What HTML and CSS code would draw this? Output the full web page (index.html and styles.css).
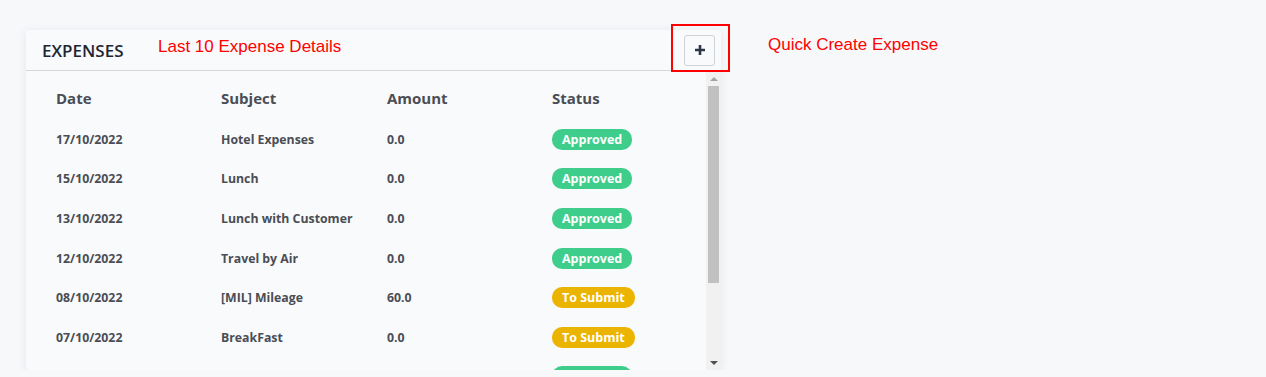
FILE: index.html
```html
<!DOCTYPE html>
<html lang="en">
<head>
    <meta charset="UTF-8">
    <title>Expenses</title>
    <link rel="stylesheet" href="styles.css">
</head>
<body>
    <div class="page">
        <div class="card">
            <div class="card-head">
                <h2 class="title">EXPENSES</h2>
                <span class="note note-left">Last 10 Expense Details</span>
                <button class="add-btn">
                    <svg width="10" height="10" viewBox="0 0 10 10"><path d="M5 0v10M0 5h10" stroke="#2d3646" stroke-width="2.6"/></svg>
                </button>
                <span class="note-box"></span>
            </div>
            <div class="card-body">
                <div class="table-wrap">
                    <table class="list">
                        <thead>
                            <tr><th>Date</th><th>Subject</th><th>Amount</th><th>Status</th></tr>
                        </thead>
                        <tbody>
                            <tr><td>17/10/2022</td><td>Hotel Expenses</td><td>0.0</td><td><span class="badge ok">Approved</span></td></tr>
                            <tr><td>15/10/2022</td><td>Lunch</td><td>0.0</td><td><span class="badge ok">Approved</span></td></tr>
                            <tr><td>13/10/2022</td><td>Lunch with Customer</td><td>0.0</td><td><span class="badge ok">Approved</span></td></tr>
                            <tr><td>12/10/2022</td><td>Travel by Air</td><td>0.0</td><td><span class="badge ok">Approved</span></td></tr>
                            <tr><td>08/10/2022</td><td>[MIL] Mileage</td><td>60.0</td><td><span class="badge todo">To Submit</span></td></tr>
                            <tr><td>07/10/2022</td><td>BreakFast</td><td>0.0</td><td><span class="badge todo">To Submit</span></td></tr>
                            <tr><td>05/10/2022</td><td>Taxi</td><td>0.0</td><td><span class="badge ok">Approved</span></td></tr>
                        </tbody>
                    </table>
                </div>
                <div class="scrollbar">
                    <span class="arrow up"></span>
                    <div class="track"><span class="thumb"></span></div>
                    <span class="arrow down"></span>
                </div>
            </div>
        </div>
        <span class="note note-right">Quick Create Expense</span>
    </div>
</body>
</html>
```
FILE: styles.css
```css
body {
    margin: 0;
    background: #f7f8fa;
    font-family: "Open Sans", "Noto Sans", sans-serif;
    color: #4a4d55;
}
.page {
    display: flex;
    align-items: flex-start;
    padding: 30px 0 0 26px;
}
.card {
    position: relative;
    width: 695px;
    background: #f9fafb;
    border-radius: 4px;
    box-shadow: 0 1px 8px rgba(90, 90, 160, 0.12);
}
.card-head {
    position: relative;
    display: flex;
    align-items: center;
    height: 40px;
    border-bottom: 1px solid #d5d7db;
    padding: 0 5px 0 16px;
}
.title {
    margin: 0;
    font-size: 17px;
    font-weight: 600;
    color: #1f2633;
    width: 116px;
}
.note {
    font-family: "Liberation Sans", Arial, sans-serif;
    font-size: 17px;
    color: #f00;
}
.note-left {
    margin-top: -6px;
}
.note-right {
    margin: 5px 0 0 47px;
}
.add-btn {
    margin-left: auto;
    margin-right: 1px;
    width: 31px;
    height: 31px;
    border: 1px solid #cfd2d6;
    border-radius: 3px;
    background: #f9fafb;
    padding: 0;
    display: flex;
    align-items: center;
    justify-content: center;
}
.note-box {
    position: absolute;
    right: -9px;
    top: -6px;
    width: 55px;
    height: 44px;
    border: 2px solid #f00;
}
.card-body {
    display: flex;
    height: 299px;
}
.table-wrap {
    flex: 1;
    overflow: hidden;
}
.scrollbar {
    width: 15px;
    display: flex;
    flex-direction: column;
    background: #f1f1f1;
}
.arrow {
    height: 15px;
    display: flex;
    align-items: center;
    justify-content: center;
}
.arrow::before {
    content: "";
    border-left: 4px solid transparent;
    border-right: 4px solid transparent;
}
.up::before {
    border-bottom: 4px solid #a3a3a3;
}
.down::before {
    border-top: 4px solid #505050;
}
.track {
    flex: 1;
    padding: 0 2px;
}
.thumb {
    display: block;
    height: 197px;
    background: #c1c1c1;
}
.list {
    border-collapse: collapse;
    table-layout: fixed;
    width: 100%;
}
.list th, .list td {
    text-align: left;
    padding: 0;
}
.list th:nth-child(1) { width: 165px; }
.list th:nth-child(2) { width: 166px; }
.list th:nth-child(3) { width: 165px; }
.list th:first-child, .list td:first-child {
    padding-left: 30px;
}
.list th {
    height: 42px;
    padding-top: 6px;
    font-size: 15px;
    font-weight: 700;
    color: #4a4d55;
}
.list td {
    height: 38.6px;
    padding-top: 1px;
    font-size: 12.3px;
    font-weight: 700;
    color: #4a4d55;
}
.badge {
    display: inline-block;
    padding: 2px 10px;
    border-radius: 10px;
    color: #fff;
    font-size: 12.5px;
    font-weight: 700;
}
.ok {
    background: #3ecd8b;
}
.todo {
    background: #ebb400;
}
```
